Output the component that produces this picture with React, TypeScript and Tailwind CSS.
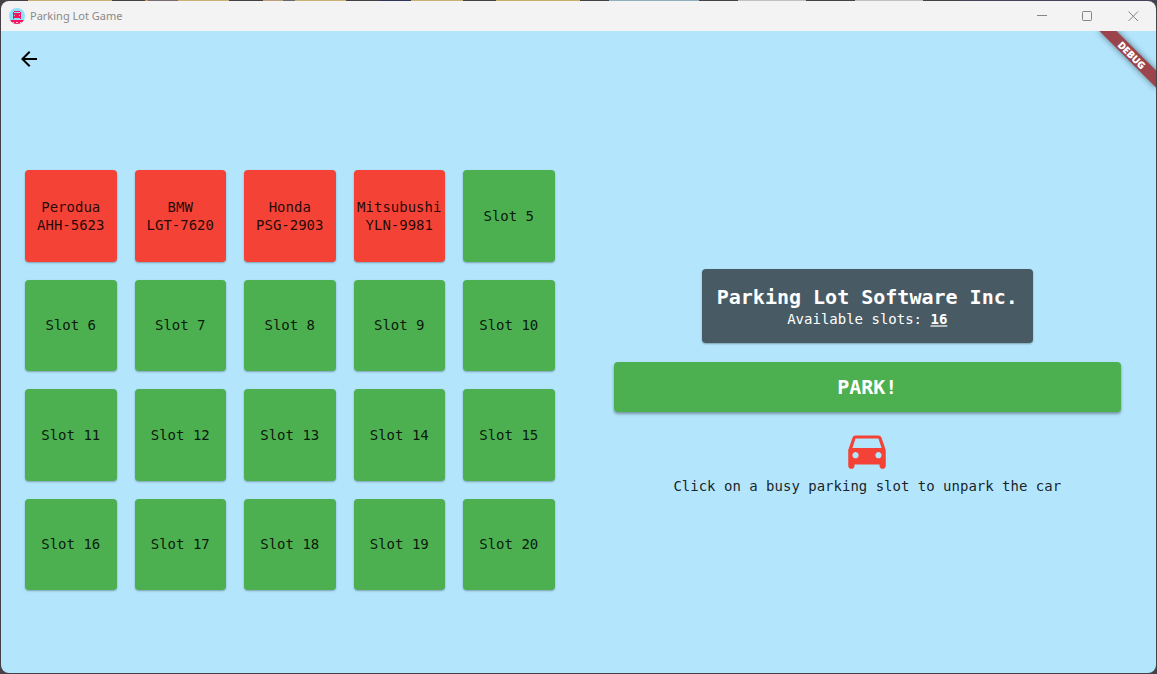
import React from "react";

type Slot = { id: number; car?: { make: string; plate: string } };

const parked = [
  { make: "Perodua", plate: "AHH-5623" },
  { make: "BMW", plate: "LGT-7620" },
  { make: "Honda", plate: "PSG-2903" },
  { make: "Mitsubushi", plate: "YLN-9981" },
];

const slots: Slot[] = Array.from({ length: 20 }, (_, i) => ({ id: i + 1, car: parked[i] }));

function AppLogo() {
  return (
    <svg className="size-4" viewBox="0 0 16 16" aria-hidden="true">
      <defs>
        <clipPath id="logo-clip">
          <circle cx="8" cy="8" r="8" />
        </clipPath>
      </defs>
      <g clipPath="url(#logo-clip)">
        <rect width="16" height="16" fill="#8fe0fb" />
        <path d="M0 12h16v4H0z" fill="#f3165f" />
        <path d="M3 14h2v1H3zM7 14h2v1H7zM11 14h2v1h-2z" fill="#e3c6dc" />
        <path
          d="M5 3h6v1h1v7h-1v-1H5v1H4V4h1zM5 4v1h6V4zM5 7v1h1V7zM10 7v1h1V7z"
          fill="#f3165f"
          fillRule="evenodd"
        />
      </g>
    </svg>
  );
}

function TitleBar() {
  return (
    <header className="flex h-[30px] shrink-0 items-center justify-between bg-[#f3f3f3] pl-2">
      <div className="flex items-center gap-[5px]">
        <AppLogo />
        <h1 className="font-['Noto_Sans','Open_Sans',sans-serif] text-[11px] leading-4 text-[#8a8a8a]">
          Parking Lot Game
        </h1>
      </div>
      <div className="flex text-[#858585]">
        <button aria-label="Minimize" className="flex h-[30px] w-[45px] items-center justify-center">
          <svg className="size-[11px]" viewBox="0 0 11 11" fill="none" stroke="currentColor">
            <path d="M1 4.500h10" />
          </svg>
        </button>
        <button aria-label="Maximize" className="flex h-[30px] w-[46px] items-center justify-center">
          <svg className="size-[11px]" viewBox="0 0 11 11" fill="none" stroke="currentColor">
            <rect x=".5" y=".5" width="9" height="9" rx=".8" />
          </svg>
        </button>
        <button aria-label="Close" className="flex h-[30px] w-[46px] items-center justify-center">
          <svg className="size-[11px]" viewBox="0 0 11 11" fill="none" stroke="currentColor">
            <path d="M.5.5l9.500 9.500M10 .5L.5 10" />
          </svg>
        </button>
      </div>
    </header>
  );
}

function SlotButton({ slot }: { slot: Slot }) {
  const tone = slot.car ? "bg-[#f44336]" : "bg-[#4caf50]";
  return (
    <button
      className={`${tone} flex aspect-square flex-col items-center justify-center rounded-[4px] text-[14px] leading-[18px] text-black/87 shadow-[0_1px_2px_rgba(0,0,0,0.3)]`}
    >
      {slot.car ? (
        <>
          <span>{slot.car.make}</span>
          <span>{slot.car.plate}</span>
        </>
      ) : (
        <span>Slot {slot.id}</span>
      )}
    </button>
  );
}

export default function App() {
  const available = slots.filter((s) => !s.car).length;
  return (
    <div className="flex min-h-screen flex-col bg-[#454145] font-['DejaVu_Sans_Mono','Liberation_Mono',monospace]">
      <div className="h-px shrink-0 bg-[linear-gradient(90deg,#454145_28px,#c9b173_28px_112px,#454145_112px_145px,#d19a20_145px_148px,#766c72_148px_178px,#c9b173_178px_229px,#454145_229px_263px,#b9a078_263px_283px,#66666c_283px_295px,#c9b173_295px_346px,#454145_346px_380px,#2f3759_380px_411px,#c9b173_411px_463px,#454145_463px_496px,#c9ad68_496px_580px,#454145_580px_609px,#90afbd_609px_699px,#454145_699px_738px,#c2c0c2_738px_806px,#454145_806px_855px,#c2c0c2_855px_923px,#454145_923px_961px,#47425a_961px)]" />
      <div className="mx-px mb-px flex flex-1 flex-col overflow-hidden rounded-lg">
        <TitleBar />
        <div className="relative flex flex-1 flex-col overflow-hidden bg-[#b3e5fc]">
          <nav className="flex h-14 shrink-0 items-center pl-4">
            <button aria-label="Back" className="size-6">
              <svg className="size-6" viewBox="0 0 24 24" fill="#000">
                <path d="M20 11H7.830l5.590-5.590L12 4l-8 8 8 8 1.410-1.410L7.830 13H20v-2z" />
              </svg>
            </button>
          </nav>

          <main className="grid flex-1 content-center items-center md:grid-cols-2">
            <section aria-label="Parking slots" className="grid grid-cols-5 gap-[18px] px-6">
              {slots.map((slot) => (
                <SlotButton key={slot.id} slot={slot} />
              ))}
            </section>

            <section className="flex flex-col items-center px-[35px] pt-1">
              <div className="rounded-[4px] bg-[#485b64] p-[15px] text-center text-white shadow-[0_1px_2px_rgba(0,0,0,0.3)]">
                <h2 className="text-[20px] leading-[26px] font-bold">Parking Lot Software Inc.</h2>
                <p className="text-[14px] leading-[18px]">
                  Available slots:{" "}
                  <strong className="underline decoration-white/60 decoration-2 underline-offset-1">
                    {available}
                  </strong>
                </p>
              </div>
              <button className="mt-[19px] h-[50px] w-full rounded-[4px] bg-[#4caf50] text-[20px] leading-[26px] font-bold text-white shadow-[0_2px_3px_rgba(0,0,0,0.35)]">
                PARK!
              </button>
              <svg className="mt-[13px] size-[50px]" viewBox="0 0 24 24" fill="#f44336" aria-hidden="true">
                <path d="M18.920 6.010C18.720 5.420 18.160 5 17.500 5h-11c-.66 0-1.210.42-1.420 1.010L3 12v7.500c0 .83.67 1.500 1.500 1.500S6 20.330 6 19.500V19h12v.5c0 .83.67 1.500 1.500 1.500s1.500-.67 1.500-1.500V12l-2.080-5.990zM6.500 16c-.83 0-1.500-.67-1.500-1.500S5.670 13 6.500 13s1.500.67 1.500 1.500S7.330 16 6.500 16zm11 0c-.83 0-1.500-.67-1.500-1.500s.67-1.500 1.500-1.500 1.500.67 1.500 1.500-.67 1.500-1.500 1.500zM5 11l1.500-4.500h11L19 11H5z" />
              </svg>
              <p className="mt-[2px] text-center text-[14px] leading-[18px] text-black/87">
                Click on a busy parking slot to unpark the car
              </p>
            </section>
          </main>

          <div className="absolute top-7 -right-10 flex h-3 w-20 origin-[40px_-28px] rotate-45 items-center justify-center bg-[#9b444b] font-['Open_Sans',sans-serif] text-[10px] leading-3 font-extrabold text-white shadow-[0_0_6px_rgba(0,0,0,0.5)]">
            DEBUG
          </div>
        </div>
      </div>
    </div>
  );
}
